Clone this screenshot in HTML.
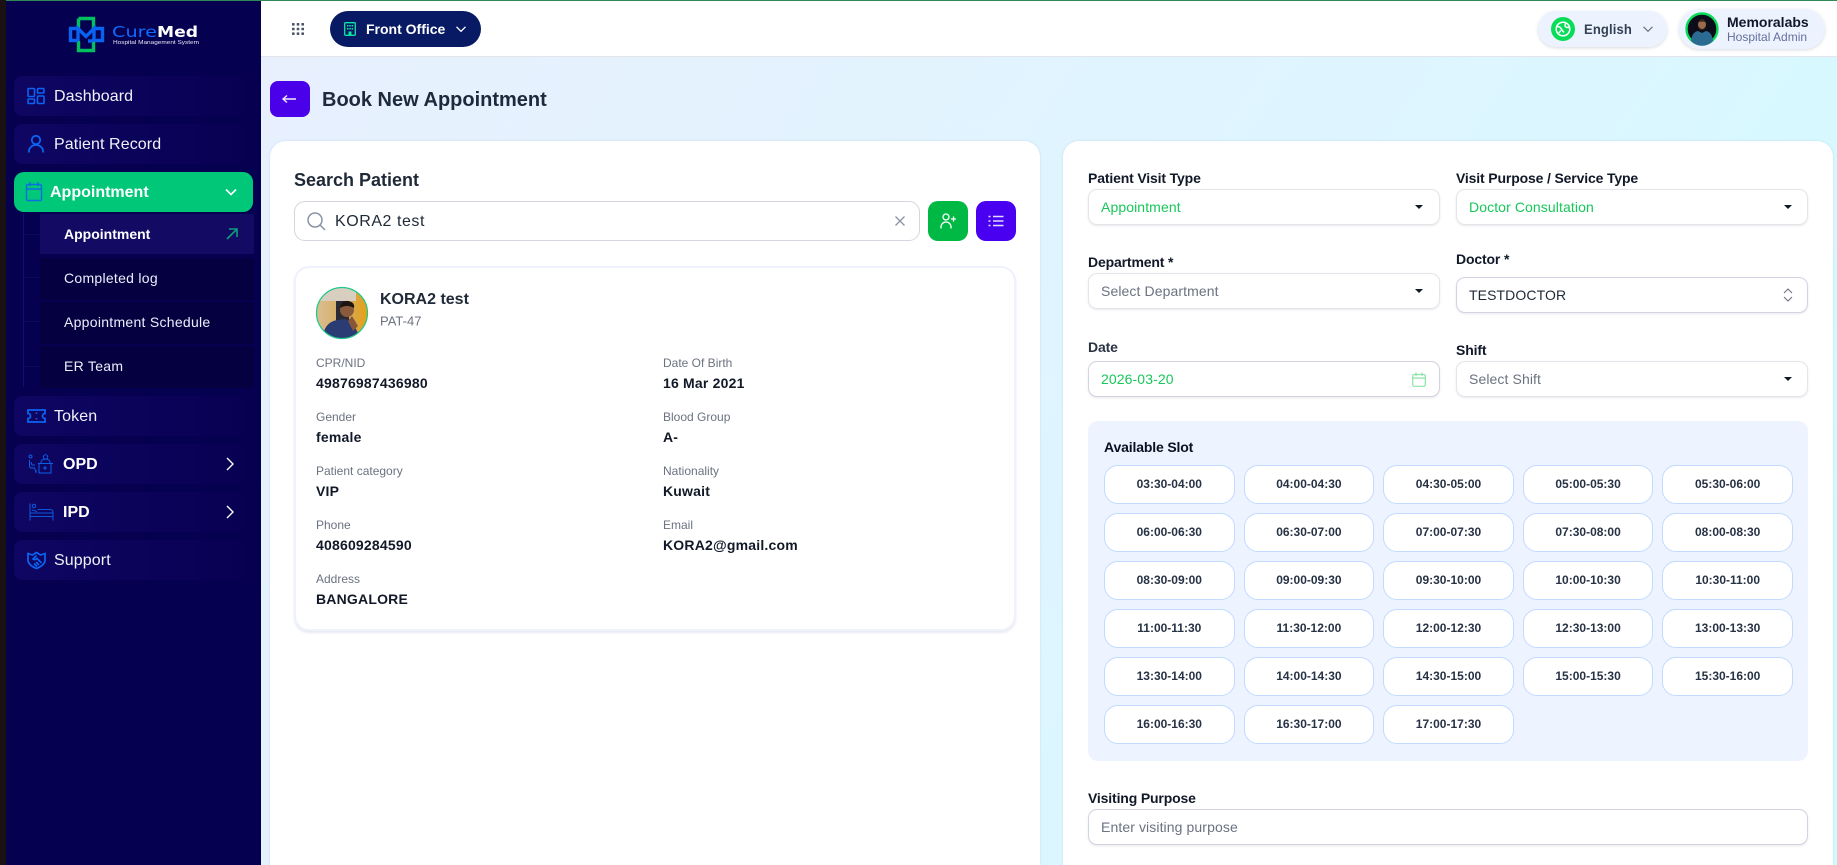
<!DOCTYPE html>
<html lang="en"><head><meta charset="utf-8"><title>Book New Appointment</title>
<style>
*{box-sizing:border-box;margin:0;padding:0}
html,body{width:1837px;height:865px;overflow:hidden;background:#fff;font-family:"Liberation Sans",Arial,sans-serif}
.a{position:absolute}
.t{position:absolute;white-space:nowrap;line-height:1;transform:translateY(-50%)}
svg{position:absolute;display:block;overflow:visible}
.nav{position:absolute;left:14px;width:239px;height:40px;border-radius:8px;background:linear-gradient(90deg,#0e0662,#070052)}
.sub{position:absolute;left:40px;width:214px;height:42px;background:#05003f}
.nt{color:#f1f1f8;font-size:16px;letter-spacing:.1px}
.nb{color:#fff;font-size:16px;font-weight:bold}
.st{color:#eef;font-size:14px;letter-spacing:.28px}
.lab{color:#6b7280;font-size:12px}
.val{color:#111827;font-size:14px;font-weight:bold;letter-spacing:.2px}
.fl{color:#111827;font-size:14px;font-weight:bold;letter-spacing:-.15px}
.sel{position:absolute;width:352px;height:36px;background:#fff;border:1px solid #e4e5ea;border-radius:9px;box-shadow:0 1px 2px rgba(30,30,60,.1)}
.inp{border:1.5px solid #d3d4e2}
.ft{font-size:14px;letter-spacing:.1px}
.gr{color:#16c75a}.ph{color:#6b7280}
.tri{position:absolute;width:0;height:0;border-left:4px solid transparent;border-right:4px solid transparent;border-top:4.5px solid #111827}
.grid{position:absolute;left:1104px;top:465px;width:689px;display:grid;grid-template-columns:repeat(5,130.6px);column-gap:9px;row-gap:9px}
.grid div{height:39px;background:#fff;border:1.5px solid #c3daff;border-radius:14px;color:#273244;font-size:12px;font-weight:bold;text-align:center;line-height:36px}
</style></head>
<body>
<div class="a" style="left:0;top:0;width:6px;height:865px;background:#1a1112"></div>
<div class="a" style="left:6px;top:1px;width:255px;height:864px;background:#05004f"></div>

<!-- main background -->
<div class="a" style="left:261px;top:56px;width:1576px;height:809px;background:linear-gradient(125deg,#e8f0fe 0%,#dcf6ff 62%,#cffcff 100%)"></div>

<!-- top bar -->
<div class="a" style="left:261px;top:1px;width:1576px;height:56px;background:#fff;border-bottom:1px solid #e3e5ea"></div>
<div class="a" style="left:6px;top:0;width:1831px;height:1px;background:#2f8a57"></div>

<!-- logo -->
<svg style="left:69px;top:17px" width="35" height="35" viewBox="0 0 35 35">
<path d="M9.500 1.500h15v10M24.500 24v9.500h-15V24M9.500 1.500V11" fill="none" stroke="#00c060" stroke-width="3.400"/>
<path d="M9 11.500H1.500v12H9M26 11.500h7.500v12H26" fill="none" stroke="#0a62f0" stroke-width="3.400"/>
<path d="M9 24V11.500l8 8 8-8V21q0 3-3 3h-3" fill="none" stroke="#0a62f0" stroke-width="3.400"/>
</svg>
<svg style="left:0;top:0" width="261" height="60">
<text x="112" y="37" font-family="DejaVu Sans,sans-serif" font-size="15" fill="#0f6bff" textLength="45" lengthAdjust="spacingAndGlyphs">Cure</text>
<text x="157" y="37" font-family="DejaVu Sans,sans-serif" font-size="15" font-weight="bold" fill="#fff" textLength="41" lengthAdjust="spacingAndGlyphs">Med</text>
<text x="113" y="44" font-family="Liberation Sans,sans-serif" font-size="5" fill="#e8e8f4" textLength="86" lengthAdjust="spacingAndGlyphs">Hospital Management System</text>
</svg>

<!-- side nav -->
<div class="nav" style="top:76px"></div>
<div class="nav" style="top:124px"></div>
<div class="nav" style="top:172px;background:#00c878;border-radius:10px"></div>
<div class="a" style="left:23px;top:214px;width:1px;height:173px;background:#12106e"></div>
<div class="a" style="left:24px;top:234px;width:16px;height:1px;background:#0c0a60"></div>
<div class="a" style="left:24px;top:277px;width:16px;height:1px;background:#0c0a60"></div>
<div class="a" style="left:24px;top:321px;width:16px;height:1px;background:#0c0a60"></div>
<div class="a" style="left:24px;top:366px;width:16px;height:1px;background:#0c0a60"></div>
<div class="sub" style="top:214px;height:40px;background:#130a63"></div>
<div class="sub" style="top:258px"></div>
<div class="sub" style="top:302px"></div>
<div class="sub" style="top:346px"></div>
<div class="nav" style="top:396px"></div>
<div class="nav" style="top:444px"></div>
<div class="nav" style="top:492px"></div>
<div class="nav" style="top:540px"></div>

<svg style="left:27px;top:87px" width="18" height="18" viewBox="0 0 18 18" fill="none" stroke="#0c62f2" stroke-width="1.600"><rect x="1" y="1.500" width="6.500" height="8" rx="1"/><rect x="10.500" y="1.500" width="6.500" height="4.500" rx="1"/><rect x="1" y="12" width="6.500" height="4.500" rx="1"/><rect x="10.500" y="9" width="6.500" height="7.500" rx="1"/></svg>
<div class="t nt" style="left:54px;top:97px">Dashboard</div>
<svg style="left:27px;top:134px" width="18" height="19" viewBox="0 0 18 19" fill="none" stroke="#0c62f2" stroke-width="1.800"><circle cx="9" cy="6" r="4.200"/><path d="M2 18.500v-1.500a7 6 0 0 1 14 0v1.500"/></svg>
<div class="t nt" style="left:54px;top:145px">Patient Record</div>
<svg style="left:25px;top:181px" width="18" height="21" viewBox="0 0 18 21" fill="none" stroke="#0a6fe0" stroke-width="1.500"><rect x="1.500" y="3.500" width="15" height="16" rx="1.500"/><path d="M1.500 8h15M5 1v4M13 1v4"/></svg>
<div class="t nb" style="left:50px;top:193px">Appointment</div>
<svg style="left:225px;top:188px" width="12" height="8" viewBox="0 0 12 8" fill="none" stroke="#fff" stroke-width="1.600"><path d="M1 1.500l5 5 5-5"/></svg>
<div class="t" style="left:64px;top:234px;color:#fff;font-size:14px;font-weight:bold">Appointment</div>
<svg style="left:226px;top:228px" width="12" height="12" viewBox="0 0 12 12" fill="none" stroke="#0f9d7c" stroke-width="1.600"><path d="M1 11L11 1M3 1h8v8"/></svg>
<div class="t st" style="left:64px;top:278px">Completed log</div>
<div class="t st" style="left:64px;top:322px">Appointment Schedule</div>
<div class="t st" style="left:64px;top:366px">ER Team</div>
<svg style="left:27px;top:409px" width="19" height="14" viewBox="0 0 19 14" fill="none" stroke="#0c62f2" stroke-width="1.800"><path d="M1 1h17v3.500a2.500 2.500 0 0 0 0 5V13H1V9.500a2.500 2.500 0 0 0 0-5z"/><path d="M9.500 3.500v1.500M9.500 9v1.500" stroke-width="1.500"/></svg>
<div class="t nt" style="left:54px;top:417px">Token</div>
<svg style="left:28px;top:454px" width="25" height="20" viewBox="0 0 25 20" fill="none" stroke="#0c5ee6" stroke-width="1"><circle cx="2.500" cy="2.500" r="1.500"/><path d="M1.500 6v6q0 2 2 2h3l1.500 4M3 8l1 3h3M8 19v-3"/><circle cx="17.500" cy="3" r="2.200"/><path d="M13 9V8a4.500 3 0 0 1 9 0v1M10 9.500h15M11 9.500v9.500h12V9.500M17 12v4M15 14h4"/></svg>
<div class="t nb" style="left:63px;top:465px">OPD</div>
<svg style="left:225px;top:457px" width="10" height="14" viewBox="0 0 10 14" fill="none" stroke="#fff" stroke-width="1.400"><path d="M2 1l6 6-6 6"/></svg>
<svg style="left:29px;top:503px" width="25" height="18" viewBox="0 0 25 18" fill="none" stroke="#0c55d8" stroke-width="1.100"><path d="M1 0.500V17.500M1 13.500h23M24 17.500V9.500q0-3-3-3H8.500M1 10h23"/><circle cx="5" cy="3" r="1.700"/><path d="M3 7l5 1.500"/></svg>
<div class="t nb" style="left:63px;top:513px">IPD</div>
<svg style="left:225px;top:505px" width="10" height="14" viewBox="0 0 10 14" fill="none" stroke="#fff" stroke-width="1.400"><path d="M2 1l6 6-6 6"/></svg>
<svg style="left:27px;top:551px" width="19" height="18" viewBox="0 0 19 18" fill="none" stroke="#0c66f5" stroke-width="1.700"><path d="M1 2.500l4.500 1.500L9.500 1.500 13.500 4 18 2.500V9q0 5-8.500 8.500Q1 14 1 9z"/><path d="M9.500 4.500L6 8q2 1.500 4-.5l4.500 4.500M12 14l-3-3M10 15.500L7 12.500"/></svg>
<div class="t nt" style="left:54px;top:561px">Support</div>

<!-- topbar content -->
<svg style="left:292px;top:23px" width="12" height="12" viewBox="0 0 12 12" fill="#4b5563"><rect x="0" y="0" width="2.600" height="2.600" rx=".6"/><rect x="4.700" y="0" width="2.600" height="2.600" rx=".6"/><rect x="9.400" y="0" width="2.600" height="2.600" rx=".6"/><rect x="0" y="4.700" width="2.600" height="2.600" rx=".6"/><rect x="4.700" y="4.700" width="2.600" height="2.600" rx=".6"/><rect x="9.400" y="4.700" width="2.600" height="2.600" rx=".6"/><rect x="0" y="9.400" width="2.600" height="2.600" rx=".6"/><rect x="4.700" y="9.400" width="2.600" height="2.600" rx=".6"/><rect x="9.400" y="9.400" width="2.600" height="2.600" rx=".6"/></svg>
<div class="a" style="left:330px;top:11px;width:151px;height:36px;border-radius:18px;background:#081a63"></div>
<svg style="left:344px;top:22px" width="12" height="14" viewBox="0 0 12 14"><rect x=".7" y=".7" width="10.600" height="12.600" rx="1" fill="none" stroke="#0ae6a4" stroke-width="1.300"/><path d="M3 3h1.500v1.500H3zM5.300 3h1.500v1.500H5.300zM7.600 3h1.500v1.500H7.600zM3 6h1.500v1.500H3zM5.300 6h1.500v1.500H5.300zM7.600 6h1.500v1.500H7.600zM4.500 9.500h3V13h-3z" fill="#0ae6a4"/></svg>
<div class="t" style="left:366px;top:29px;color:#fff;font-size:14px;font-weight:bold">Front Office</div>
<svg style="left:456px;top:26px" width="10" height="6" viewBox="0 0 10 6" fill="none" stroke="#fff" stroke-width="1.300"><path d="M.5 .8l4.500 4.500L9.500 .8"/></svg>

<div class="a" style="left:1538px;top:11px;width:129px;height:36px;border-radius:18px;background:#edf3fe;box-shadow:0 1px 3px rgba(100,110,140,.25)"></div>
<svg style="left:1551px;top:17px" width="24" height="24" viewBox="0 0 24 24"><circle cx="12" cy="12" r="12" fill="#08dc58"/><circle cx="12" cy="12" r="6.800" fill="none" stroke="#fff" stroke-width="1.500"/><path d="M6 9.500q3 0 4 2t3 4M15 6q-2 3 0 4t3.500 0M8 16q1-2 2-2" fill="none" stroke="#fff" stroke-width="1.500"/></svg>
<div class="t" style="left:1584px;top:29px;color:#334155;font-size:14px;letter-spacing:.15px;font-weight:bold;transform:translateY(-50%) scaleX(.93);transform-origin:left">English</div>
<svg style="left:1643px;top:26px" width="10" height="6" viewBox="0 0 10 6" fill="none" stroke="#6b7280" stroke-width="1.200"><path d="M.5 .8l4.500 4.500L9.500 .8"/></svg>

<div class="a" style="left:1679px;top:9px;width:146px;height:40px;border-radius:20px;background:#edf3fe;box-shadow:0 1px 3px rgba(100,110,140,.25)"></div>
<svg style="left:1685px;top:12px" width="34" height="34" viewBox="0 0 34 34"><circle cx="17" cy="17" r="15.500" fill="#0b0d1a" stroke="#08dc58" stroke-width="2.400"/><path d="M6 29q1-9 7-10l4 2 4-2q6 1 7 10a15 15 0 0 1-22 0z" fill="#2b6b92"/><ellipse cx="17" cy="12.500" rx="4" ry="5" fill="#9a6a4e"/><path d="M13 14q4 6 8 0v2q-4 5-8 0z" fill="#2a1a14"/><path d="M13 10q4-4 8 0-4-1-8 0z" fill="#22130e"/></svg>
<div class="t" style="left:1727px;top:22px;color:#0f172a;font-size:14px;font-weight:bold">Memoralabs</div>
<div class="t" style="left:1727px;top:37px;color:#64709c;font-size:12px">Hospital Admin</div>

<!-- heading -->
<div class="a" style="left:270px;top:81px;width:40px;height:36px;border-radius:8px;background:#4a00e8"></div>
<svg style="left:282px;top:94px" width="14" height="10" viewBox="0 0 14 10" fill="none" stroke="#f3eaff" stroke-width="1.400"><path d="M14 5H1M5 1.500L1 5l4 3.500"/></svg>
<div class="t" style="left:322px;top:100px;color:#1e293b;font-size:20px;font-weight:bold">Book New Appointment</div>

<!-- left card -->
<div class="a" style="left:270px;top:141px;width:770px;height:724px;background:#fff;border-radius:16px 16px 0 0;box-shadow:0 0 2px rgba(130,170,190,.3)"></div>
<div class="t" style="left:294px;top:180px;color:#1f2937;font-size:18px;font-weight:bold">Search Patient</div>
<div class="a" style="left:294px;top:201px;width:626px;height:40px;border:1.5px solid #d3d6df;border-radius:11px;background:#fff"></div>
<svg style="left:307px;top:212px" width="19" height="19" viewBox="0 0 19 19" fill="none" stroke="#8b94a6" stroke-width="1.500"><circle cx="8" cy="8" r="7"/><path d="M13 13l5 5"/></svg>
<div class="t" style="left:335px;top:222px;color:#1f2937;font-size:16px;letter-spacing:.55px">KORA2 test</div>
<svg style="left:895px;top:216px" width="10" height="10" viewBox="0 0 10 10" fill="none" stroke="#8b94a6" stroke-width="1.300"><path d="M.5 .5l9 9M9.500 .5l-9 9"/></svg>
<div class="a" style="left:928px;top:201px;width:40px;height:40px;border-radius:10px;background:#00b944"></div>
<svg style="left:940px;top:213px" width="17" height="16" viewBox="0 0 17 16" fill="none" stroke="#fff" stroke-width="1.300"><circle cx="6" cy="4" r="3"/><path d="M1 15.500v-1.500a5 5 0 0 1 10 0v1.500M11 6h5M13.500 3.500v5"/></svg>
<div class="a" style="left:976px;top:201px;width:40px;height:40px;border-radius:10px;background:#4a00f0"></div>
<svg style="left:988px;top:215px" width="16" height="12" viewBox="0 0 16 12" fill="none" stroke="#e4dcff" stroke-width="1.500"><path d="M5 1.500h10.500M5 6h10.500M5 10.500h10.500"/><path d="M.5 1.500h2M.5 6h2M.5 10.500h2"/></svg>

<!-- patient card -->
<div class="a" style="left:294px;top:266px;width:722px;height:365px;background:#fff;border:2px solid #eff1fc;border-radius:15px;box-shadow:0 2px 2px rgba(130,140,190,.18)"></div>
<svg style="left:316px;top:287px" width="52" height="52" viewBox="0 0 52 52">
<defs><clipPath id="ac"><circle cx="26" cy="26" r="25.500"/></clipPath><linearGradient id="ag" x1="0" x2="1"><stop offset="0" stop-color="#d9bf93"/><stop offset=".7" stop-color="#d8a64c"/><stop offset="1" stop-color="#e8a010"/></linearGradient></defs>
<g clip-path="url(#ac)"><rect width="52" height="52" fill="url(#ag)"/><rect x="0" y="0" width="40" height="14" fill="#d8cfc0"/><rect x="20" y="14" width="13" height="20" fill="#2a2a35"/>
<path d="M7 52q0-16 14-19l8-1q10 3 15 20z" fill="#2b3b74"/><circle cx="31" cy="23" r="7" fill="#8a5a3c"/><path d="M24 21q1-8 8-7 7 1 6 7-7-4-14 0z" fill="#1d1512"/><path d="M36 29l6 10-5 5-5-10z" fill="#87553a"/></g>
<circle cx="26" cy="26" r="25.500" fill="none" stroke="#1cc98a" stroke-width="1.200"/></svg>
<div class="t" style="left:380px;top:300px;color:#1f2937;font-size:16px;font-weight:bold">KORA2 test</div>
<div class="t" style="left:380px;top:321px;color:#6b7280;font-size:13px">PAT-47</div>

<div class="t lab" style="left:316px;top:363px">CPR/NID</div><div class="t val" style="left:316px;top:383px">49876987436980</div>
<div class="t lab" style="left:663px;top:363px">Date Of Birth</div><div class="t val" style="left:663px;top:383px">16 Mar 2021</div>
<div class="t lab" style="left:316px;top:417px">Gender</div><div class="t val" style="left:316px;top:437px">female</div>
<div class="t lab" style="left:663px;top:417px">Blood Group</div><div class="t val" style="left:663px;top:437px">A-</div>
<div class="t lab" style="left:316px;top:471px">Patient category</div><div class="t val" style="left:316px;top:491px">VIP</div>
<div class="t lab" style="left:663px;top:471px">Nationality</div><div class="t val" style="left:663px;top:491px">Kuwait</div>
<div class="t lab" style="left:316px;top:525px">Phone</div><div class="t val" style="left:316px;top:545px">408609284590</div>
<div class="t lab" style="left:663px;top:525px">Email</div><div class="t val" style="left:663px;top:545px">KORA2@gmail.com</div>
<div class="t lab" style="left:316px;top:579px">Address</div><div class="t val" style="left:316px;top:599px">BANGALORE</div>

<!-- right card -->
<div class="a" style="left:1063px;top:141px;width:770px;height:724px;background:#fff;border-radius:16px 16px 0 0;box-shadow:0 0 2px rgba(130,170,190,.3)"></div>

<div class="t fl" style="left:1088px;top:178px">Patient Visit Type</div>
<div class="sel" style="left:1088px;top:189px"></div>
<div class="t ft gr" style="left:1101px;top:207px">Appointment</div><div class="tri" style="left:1415px;top:205px"></div>

<div class="t fl" style="left:1456px;top:178px">Visit Purpose / Service Type</div>
<div class="sel" style="left:1456px;top:189px"></div>
<div class="t ft gr" style="left:1469px;top:207px">Doctor Consultation</div><div class="tri" style="left:1784px;top:205px"></div>

<div class="t fl" style="left:1088px;top:262px">Department *</div>
<div class="sel" style="left:1088px;top:273px"></div>
<div class="t ft ph" style="left:1101px;top:291px">Select Department</div><div class="tri" style="left:1415px;top:289px"></div>

<div class="t fl" style="left:1456px;top:259px">Doctor *</div>
<div class="sel inp" style="left:1456px;top:277px"></div>
<div class="t ft" style="left:1469px;top:295px;color:#1f2937">TESTDOCTOR</div>
<svg style="left:1783px;top:288px" width="10" height="14" viewBox="0 0 10 14" fill="none" stroke="#6b7280" stroke-width="1.100"><path d="M1 5l4-4 4 4M1 9l4 4 4-4"/></svg>

<div class="t fl" style="left:1088px;top:347px;color:#2a3342">Date</div>
<div class="sel inp" style="left:1088px;top:361px"></div>
<div class="t ft gr" style="left:1101px;top:379px">2026-03-20</div>
<svg style="left:1412px;top:372px" width="14" height="15" viewBox="0 0 14 15" fill="none" stroke="#8ae4ab" stroke-width="1.200"><rect x=".7" y="2.500" width="12.600" height="11.800" rx="1.500"/><path d="M.7 6h12.600M4 .5v3.500M10 .5v3.500"/></svg>

<div class="t fl" style="left:1456px;top:350px">Shift</div>
<div class="sel" style="left:1456px;top:361px"></div>
<div class="t ft ph" style="left:1469px;top:379px">Select Shift</div><div class="tri" style="left:1784px;top:377px"></div>

<div class="a" style="left:1088px;top:421px;width:720px;height:340px;background:#edf4ff;border-radius:10px"></div>
<div class="t fl" style="left:1104px;top:447px;color:#0b1020">Available Slot</div>
<div class="grid">
<div>03:30-04:00</div><div>04:00-04:30</div><div>04:30-05:00</div><div>05:00-05:30</div><div>05:30-06:00</div>
<div>06:00-06:30</div><div>06:30-07:00</div><div>07:00-07:30</div><div>07:30-08:00</div><div>08:00-08:30</div>
<div>08:30-09:00</div><div>09:00-09:30</div><div>09:30-10:00</div><div>10:00-10:30</div><div>10:30-11:00</div>
<div>11:00-11:30</div><div>11:30-12:00</div><div>12:00-12:30</div><div>12:30-13:00</div><div>13:00-13:30</div>
<div>13:30-14:00</div><div>14:00-14:30</div><div>14:30-15:00</div><div>15:00-15:30</div><div>15:30-16:00</div>
<div>16:00-16:30</div><div>16:30-17:00</div><div>17:00-17:30</div>
</div>

<div class="t fl" style="left:1088px;top:798px">Visiting Purpose</div>
<div class="sel inp" style="left:1088px;top:809px;width:720px"></div>
<div class="t ft ph" style="left:1101px;top:827px">Enter visiting purpose</div>
</body></html>
